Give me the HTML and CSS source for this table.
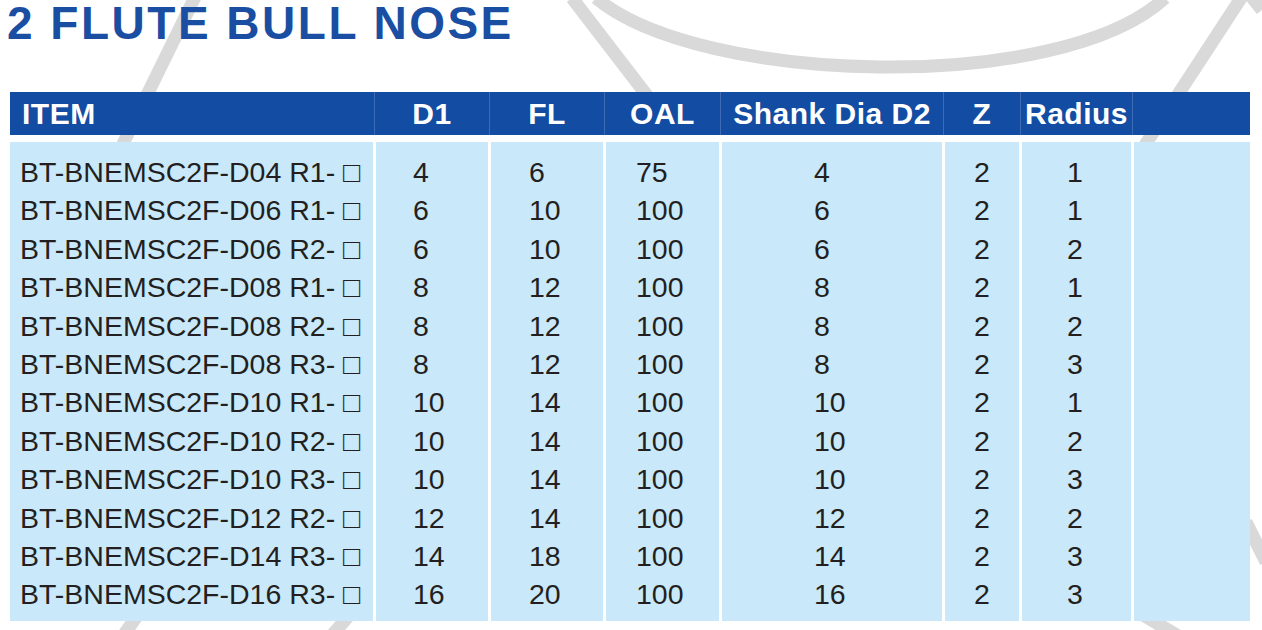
FILE: index.html
```html
<!DOCTYPE html>
<html lang="en">
<head>
<meta charset="utf-8">
<title>2 Flute Bull Nose</title>
<link rel="stylesheet" href="styles.css">
</head>
<body>
<div class="page">
  <svg class="watermark" width="1262" height="630" viewBox="0 0 1262 630" aria-hidden="true">
    <g fill="none" stroke="#d9d9d9" stroke-width="13">
      <path d="M196 -5 L120 150"/>
      <path d="M596 -2 C700 85 1060 95 1165 -2"/>
      <path d="M572 -2 L652 102"/>
      <path d="M1243 -5 L1145 145"/>
      <path d="M1262 10 L1250 -5"/>
      <path d="M140 612 L120 640"/>
      <path d="M352 612 L328 640"/>
      <path d="M1138 612 L1185 640"/>
      <path d="M1246 522 L1266 562"/>
    </g>
  </svg>
  <h1 class="title">2 FLUTE BULL NOSE</h1>
  <div class="spec">
    <div class="spec-head">
      <div class="hcell hcell-item">ITEM</div>
      <div class="hcell">D1</div>
      <div class="hcell">FL</div>
      <div class="hcell">OAL</div>
      <div class="hcell">Shank Dia D2</div>
      <div class="hcell">Z</div>
      <div class="hcell">Radius</div>
      <div class="hcell hcell-last"></div>
    </div>
    <div class="spec-body">
      <div class="c">BT-BNEMSC2F-D04 R1- □</div><div class="c">4</div><div class="c">6</div><div class="c">75</div><div class="c">4</div><div class="c">2</div><div class="c">1</div><div class="c"></div>
      <div class="c">BT-BNEMSC2F-D06 R1- □</div><div class="c">6</div><div class="c">10</div><div class="c">100</div><div class="c">6</div><div class="c">2</div><div class="c">1</div><div class="c"></div>
      <div class="c">BT-BNEMSC2F-D06 R2- □</div><div class="c">6</div><div class="c">10</div><div class="c">100</div><div class="c">6</div><div class="c">2</div><div class="c">2</div><div class="c"></div>
      <div class="c">BT-BNEMSC2F-D08 R1- □</div><div class="c">8</div><div class="c">12</div><div class="c">100</div><div class="c">8</div><div class="c">2</div><div class="c">1</div><div class="c"></div>
      <div class="c">BT-BNEMSC2F-D08 R2- □</div><div class="c">8</div><div class="c">12</div><div class="c">100</div><div class="c">8</div><div class="c">2</div><div class="c">2</div><div class="c"></div>
      <div class="c">BT-BNEMSC2F-D08 R3- □</div><div class="c">8</div><div class="c">12</div><div class="c">100</div><div class="c">8</div><div class="c">2</div><div class="c">3</div><div class="c"></div>
      <div class="c">BT-BNEMSC2F-D10 R1- □</div><div class="c">10</div><div class="c">14</div><div class="c">100</div><div class="c">10</div><div class="c">2</div><div class="c">1</div><div class="c"></div>
      <div class="c">BT-BNEMSC2F-D10 R2- □</div><div class="c">10</div><div class="c">14</div><div class="c">100</div><div class="c">10</div><div class="c">2</div><div class="c">2</div><div class="c"></div>
      <div class="c">BT-BNEMSC2F-D10 R3- □</div><div class="c">10</div><div class="c">14</div><div class="c">100</div><div class="c">10</div><div class="c">2</div><div class="c">3</div><div class="c"></div>
      <div class="c">BT-BNEMSC2F-D12 R2- □</div><div class="c">12</div><div class="c">14</div><div class="c">100</div><div class="c">12</div><div class="c">2</div><div class="c">2</div><div class="c"></div>
      <div class="c">BT-BNEMSC2F-D14 R3- □</div><div class="c">14</div><div class="c">18</div><div class="c">100</div><div class="c">14</div><div class="c">2</div><div class="c">3</div><div class="c"></div>
      <div class="c">BT-BNEMSC2F-D16 R3- □</div><div class="c">16</div><div class="c">20</div><div class="c">100</div><div class="c">16</div><div class="c">2</div><div class="c">3</div><div class="c"></div>
    </div>
  </div>
</div>
</body>
</html>
```
FILE: styles.css
```css
html, body {
  margin: 0;
  padding: 0;
  background: #ffffff;
}

.page {
  position: relative;
  width: 1262px;
  height: 630px;
  overflow: hidden;
  font-family: "Liberation Sans", Arial, "DejaVu Sans", sans-serif;
}

.watermark {
  position: absolute;
  left: 0;
  top: 0;
  z-index: 0;
}

.title {
  position: relative;
  z-index: 1;
  margin: 0 0 46px 7px;
  font-size: 46px;
  line-height: 46px;
  font-weight: 700;
  letter-spacing: 2.5px;
  color: #1a4ea2;
}

.spec {
  position: relative;
  z-index: 1;
  margin-left: 10px;
  width: 1240px;
}

.spec-head,
.spec-body {
  display: grid;
  grid-template-columns: 363px 112px 112px 113px 220px 74px 109px 116px;
  column-gap: 3px;
}

.spec-head {
  background: #124ca3;
  height: 43px;
  margin-bottom: 7px;
}

.hcell {
  position: relative;
  color: #ffffff;
  font-weight: 700;
  font-size: 30px;
  line-height: 43px;
  letter-spacing: 0.5px;
  text-align: center;
  white-space: nowrap;
}

.hcell::after {
  content: "";
  position: absolute;
  top: 0;
  bottom: 0;
  right: -2px;
  width: 1px;
  background: #3f6ab4;
}

.hcell-last::after {
  display: none;
}

.hcell-item {
  text-align: left;
  padding-left: 12px;
}

.c {
  background: #c9e8fa;
  color: #231f20;
  font-size: 28.5px;
  line-height: 38.4px;
  white-space: nowrap;
}

.spec-body .c:nth-child(-n+8) {
  padding-top: 11px;
}

.spec-body .c:nth-last-child(-n+8) {
  padding-bottom: 7px;
}

.spec-body .c:nth-child(8n+1) { padding-left: 10px; }
.spec-body .c:nth-child(8n+2) { padding-left: 37px; }
.spec-body .c:nth-child(8n+3) { padding-left: 38px; }
.spec-body .c:nth-child(8n+4) { padding-left: 30px; }
.spec-body .c:nth-child(8n+5) { padding-left: 92px; }
.spec-body .c:nth-child(8n+6) { padding-left: 29px; }
.spec-body .c:nth-child(8n+7) { padding-left: 45px; }
```
